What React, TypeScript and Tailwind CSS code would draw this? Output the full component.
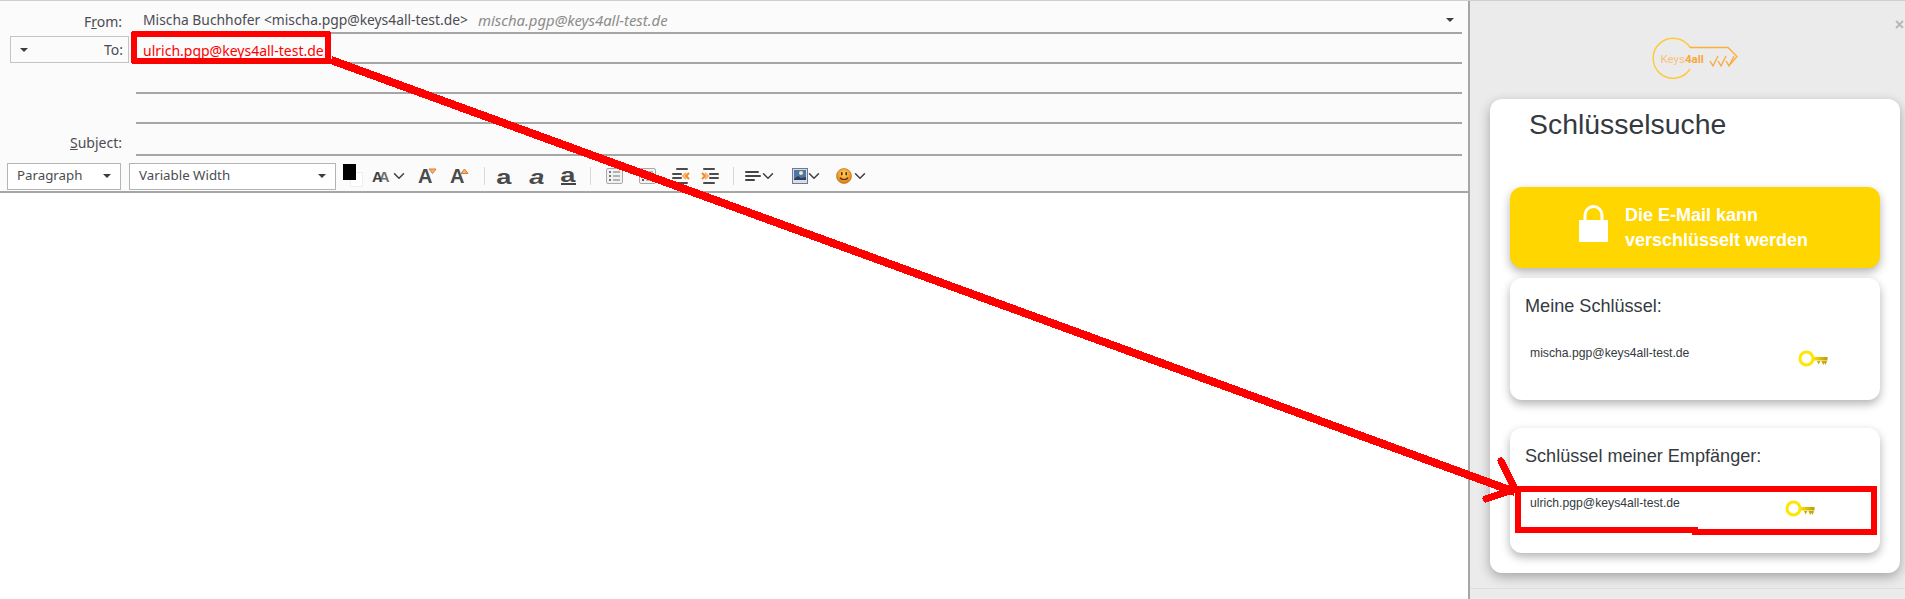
import type { ReactNode } from "react";
import { ChevronDown } from "lucide-react";

const UI_FONT = "font-['Noto_Sans',sans-serif]";

function Row({ label, height, textOffset }: { label?: ReactNode; height: string; textOffset: string }) {
  return (
    <div className={`flex ${height}`}>
      <div className={`flex w-[122px] items-center justify-end text-[14px] text-[#4c4c52] ${textOffset}`}>{label}</div>
      <div className="ml-[14px] min-w-0 flex-1 border-b-2 border-[#a6a6a6]" />
    </div>
  );
}

function Caret({ className = "" }: { className?: string }) {
  return <span className={`h-0 w-0 border-x-[4px] border-t-[4px] border-x-transparent border-t-[#3c3c44] ${className}`} />;
}

function Select({ label, width }: { label: string; width: string }) {
  return (
    <div className={`flex h-[27px] items-center justify-between border border-[#b4b4b4] bg-white pl-[9px] pr-[9px] text-[13.3px] text-[#4c4c52] ${width}`}>
      {label}
      <Caret />
    </div>
  );
}

function Chevron() {
  return <ChevronDown size={18} strokeWidth={2} className="-mx-[2.5px] text-[#3f3f45]" />;
}

function Divider() {
  return <span className="block h-[18px] w-px bg-[#d8d8d8]" />;
}

function LetterIcon({ children, italic, underline }: { children: string; italic?: boolean; underline?: boolean }) {
  return (
    <span className="flex h-[22px] w-[18px] flex-col items-center justify-center font-['Liberation_Sans',sans-serif] text-[#4a4a4a]">
      <span className={`inline-block scale-x-[1.3] text-[21px] font-bold leading-[15px] ${italic ? "italic" : ""}`}>{children}</span>
      {underline && <span className="mt-[1px] h-[2px] w-[15px] bg-[#444]" />}
    </span>
  );
}

function FontSizeIcon({ mark }: { mark: "both" | "down" | "up" }) {
  return (
    <svg width="20" height="24" viewBox="0 0 20 24">
      {mark === "both" ? (
        <>
          <defs>
            <linearGradient id="fontSizeFill" x1="0" x2="1">
              <stop offset="0.5" stopColor="#3f3f3f" />
              <stop offset="0.5" stopColor="#6f6f6f" />
            </linearGradient>
          </defs>
          <text x="0" y="18" fontFamily="Liberation Sans" fontWeight="700" fontSize="15" letterSpacing="-4" fill="url(#fontSizeFill)">AA</text>
        </>
      ) : (
        <>
          <text x="0" y="19" fontFamily="Liberation Sans" fontWeight="700" fontSize="20" fill="#4a4a4a">A</text>
          {mark === "down" ? (
            <path d="M11 5h7l-3.5 4.5z" fill="#f4b183" stroke="#e07b1a" strokeWidth="1" />
          ) : (
            <path d="M11 9.5h7L14.5 5z" fill="#f4b183" stroke="#e07b1a" strokeWidth="1" />
          )}
        </>
      )}
    </svg>
  );
}

function ListIcon({ numbered }: { numbered?: boolean }) {
  return (
    <svg width="17" height="16" viewBox="0 0 17 16">
      <rect x="0.5" y="0.5" width="16" height="15" rx="1.5" fill="#f1f1f1" stroke="#a9a9a9" />
      {[4, 8, 12].map((y) => (
        <g key={y}>
          <rect x="3" y={y - 1} width="2" height="2" fill={numbered ? "#555" : "#777"} />
          <rect x="7" y={y - 0.5} width="7" height="1" fill="#777" />
        </g>
      ))}
    </svg>
  );
}

function IndentIcon({ outdent }: { outdent?: boolean }) {
  const bars = outdent
    ? [[2, 4, 12], [7, 0, 10], [11, 0, 10], [16, 4, 12]]
    : [[2, 2, 12], [7, 8, 10], [11, 8, 10], [16, 2, 12]];
  return (
    <svg width="18" height="18" viewBox="0 0 18 18">
      {bars.map(([y, x, w]) => (
        <rect key={y} x={x} y={y - 1} width={w} height="2" rx="1" fill="#4b4b4b" />
      ))}
      <path d={outdent ? "M17 6l-3 3 3 3" : "M1 6l3 3-3 3"} fill="none" stroke="#f08a24" strokeWidth="2" />
      <path d={outdent ? "M14 6l-3 3 3 3" : "M4 6l3 3-3 3"} fill="none" stroke="#f8b26a" strokeWidth="2" />
    </svg>
  );
}

function AlignIcon() {
  return (
    <svg width="16" height="13" viewBox="0 0 16 13">
      {[[1, 14], [5, 16], [9, 10]].map(([y, w]) => (
        <rect key={y} x="0" y={y} width={w} height="2" rx="1" fill="#444" />
      ))}
    </svg>
  );
}

function ImageIcon() {
  return (
    <svg width="16" height="16" viewBox="0 0 16 16">
      <rect x="0.5" y="0.5" width="15" height="15" fill="#d8dde6" stroke="#6d7a94" />
      <rect x="2" y="2" width="12" height="9" fill="#4f76a8" />
      <circle cx="9" cy="5" r="2" fill="#f4e9b0" />
      <path d="M2 11l4-3 3 2 5-1v3H2z" fill="#2f3f58" />
    </svg>
  );
}

function Smiley() {
  return (
    <svg width="16" height="16" viewBox="0 0 16 16">
      <defs>
        <radialGradient id="smile" cx="50%" cy="35%" r="65%">
          <stop offset="0" stopColor="#ffd25e" />
          <stop offset="1" stopColor="#dd7a12" />
        </radialGradient>
      </defs>
      <circle cx="8" cy="8" r="7.5" fill="url(#smile)" stroke="#b9650f" strokeWidth="0.6" />
      <rect x="5" y="4" width="1.6" height="3.4" rx="0.8" fill="#4a2a08" />
      <rect x="9.4" y="4" width="1.6" height="3.4" rx="0.8" fill="#4a2a08" />
      <path d="M4 9.6c1.6 2.6 6.4 2.6 8 0" fill="none" stroke="#4a2a08" strokeWidth="1.1" />
    </svg>
  );
}

function Toolbar() {
  return (
    <div className="flex h-[37px] items-center border-b-2 border-[#a6a6a6] pl-[7px] pt-[5px]">
      <Select label="Paragraph" width="w-[114px]" />
      <div className="ml-[8px]">
        <Select label="Variable Width" width="w-[207px]" />
      </div>
      <div className="relative ml-[7px] h-[25px] w-[21px]">
        <span className="absolute left-[7px] top-[8px] h-[15px] w-[13px] border border-[#eee] bg-white" />
        <span className="absolute left-0 top-0 h-[16px] w-[13px] bg-black" />
      </div>
      <div className="ml-[8px]"><FontSizeIcon mark="both" /></div>
      <Chevron />
      <div className="ml-[13px]"><FontSizeIcon mark="down" /></div>
      <div className="ml-[12px]"><FontSizeIcon mark="up" /></div>
      <div className="ml-[14px]"><Divider /></div>
      <div className="ml-[10px]"><LetterIcon>a</LetterIcon></div>
      <div className="ml-[15px]"><LetterIcon italic>a</LetterIcon></div>
      <div className="ml-[13px]"><LetterIcon underline>a</LetterIcon></div>
      <div className="ml-[13px]"><Divider /></div>
      <div className="ml-[15px]"><ListIcon /></div>
      <div className="ml-[16px]"><ListIcon numbered /></div>
      <div className="ml-[16px]"><IndentIcon outdent /></div>
      <div className="ml-[11px]"><IndentIcon /></div>
      <div className="ml-[14px]"><Divider /></div>
      <div className="ml-[11px]"><AlignIcon /></div>
      <div className="ml-0"><Chevron /></div>
      <div className="ml-[18px]"><ImageIcon /></div>
      <div className="-ml-px"><Chevron /></div>
      <div className="ml-[16px]"><Smiley /></div>
      <div className="ml-px"><Chevron /></div>
    </div>
  );
}

function Logo() {
  return (
    <svg width="92" height="48" viewBox="0 0 92 48">
      <path d="M40 13.5A20 20 0 1 0 40 35" fill="none" stroke="#ffc93f" strokeWidth="1.4" />
      <path d="M40 13.5h38l9 9-7 8" fill="none" stroke="#fbb03b" strokeWidth="1.4" />
      <text x="10.5" y="29" fontFamily="Roboto" fontSize="11.5" fill="#f9c27c">
        Keys<tspan fontWeight="700" fill="#f9a63c">4all</tspan>
      </text>
      <path d="M60 27l3 5 5-10M68 27l3 5 5-10M76 27l3 5 5-10" fill="none" stroke="#f9a63c" strokeWidth="1.3" />
    </svg>
  );
}

function KeyIcon() {
  return (
    <svg width="30" height="18" viewBox="0 0 30 18">
      <defs>
        <linearGradient id="keyShaft" x1="0" x2="1">
          <stop offset="0" stopColor="#ffe100" />
          <stop offset="1" stopColor="#b89c08" />
        </linearGradient>
      </defs>
      <circle cx="8.5" cy="8.5" r="6.5" fill="none" stroke="#ffe600" strokeWidth="3" />
      <rect x="15" y="7" width="14.5" height="3.5" fill="url(#keyShaft)" />
      <path d="M19 11h3.4l-1.7 3.5zM23.4 11H29l-1.2 4-1.3-2-1.3 2z" fill="#c9ab08" />
    </svg>
  );
}

function KeyCard({ title, email, keyOffset, height }: { title: string; email: string; keyOffset: string; height: string }) {
  return (
    <section className={`rounded-[12px] bg-white pl-[15px] shadow-[0_4px_10px_rgba(0,0,0,0.3)] ${height}`}>
      <h2 className="pt-[18px] text-[18.1px] leading-[21px] text-[#343a40]">{title}</h2>
      <div className="mt-[28px] flex items-start pl-[5px]">
        <span className="w-[255px] text-[12.2px] leading-[16px] text-[#343a40]">{email}</span>
        <span className={`mt-[5px] ${keyOffset}`}><KeyIcon /></span>
      </div>
    </section>
  );
}

function Annotations() {
  return (
    <svg className="pointer-events-none absolute left-0 top-0" width="1905" height="599" viewBox="0 0 1905 599" shapeRendering="crispEdges">
      <rect x="134" y="34" width="194" height="27" fill="none" stroke="#ff0000" strokeWidth="6" strokeLinejoin="round" />
      <path d="M331 60L1515 492" stroke="#ff0000" strokeWidth="8" />
      <path d="M1501 461L1515 489L1486 499" fill="none" stroke="#ff0000" strokeWidth="7" strokeLinecap="round" />
      <path d="M1518 489H1874V532H1695V530H1518Z" fill="none" stroke="#ff0000" strokeWidth="6" />
    </svg>
  );
}

export default function App() {
  return (
    <div className={`relative h-[599px] w-[1905px] overflow-hidden bg-white ${UI_FONT}`}>
      <div className="flex h-full border-t border-[#cfcfcf]">
        <main className="h-full w-[1470px] border-r-2 border-[#a6a6a6]">
          <div className="bg-[#fbfbfb] pr-[6px]">
            <div className="flex h-[33px]">
              <div className="flex w-[122px] items-center justify-end pt-[7px] text-[14px] text-[#4c4c52]">
                <span>F<span className="underline">r</span>om:</span>
              </div>
              <div className="ml-[14px] flex flex-1 items-center border-b-2 border-[#a6a6a6] pl-[7px] pt-[7px] text-[13.85px] text-[#4c4c52]">
                Mischa Buchhofer &lt;mischa.pgp@keys4all-test.de&gt;
                <span className="ml-[10px] text-[14.9px] italic text-[#8c8c8c]">mischa.pgp@keys4all-test.de</span>
                <Caret className="ml-auto mr-[8px]" />
              </div>
            </div>
            <div className="flex h-[30px]">
              <div className="ml-[10px] mt-[2px] flex h-[27px] w-[119px] items-center justify-between border border-[#c4c4c4] pl-[9px] pr-[5px] text-[14px] text-[#4c4c52]">
                <Caret />
                To:
              </div>
              <div className="ml-[7px] flex flex-1 items-center border-b-2 border-[#a6a6a6] pl-[7px] pt-[4px] text-[14px] text-[#ff0000]">
                ulrich.pgp@keys4all-test.de
              </div>
            </div>
            <Row height="h-[30px]" textOffset="" />
            <Row height="h-[30px]" textOffset="" />
            <Row height="h-[32px]" textOffset="pt-[4px]" label={<span><span className="underline">S</span>ubject:</span>} />
          </div>
          <div className="bg-[#fbfbfb]">
            <Toolbar />
          </div>
        </main>

        <aside className="flex h-full flex-1 flex-col bg-[#ebebeb] font-['Liberation_Sans',sans-serif]">
          <header className="flex h-[98px] items-start">
            <div className="ml-[180px] mt-[33px]"><Logo /></div>
            <span className="ml-auto mr-[1px] mt-[14px] text-[16px] font-bold leading-[20px] text-[#b5b5b5]">×</span>
          </header>
          <div className="ml-[20px] h-[474px] w-[410px] rounded-[12px] bg-white px-[20px] shadow-[0_4px_12px_rgba(0,0,0,0.3)]">
            <h1 className="ml-[19px] pt-[9px] text-[28.4px] leading-[32px] text-[#343a40]">Schlüsselsuche</h1>
            <div className="mt-[47px] flex h-[81px] items-center rounded-[12px] bg-[#ffd600] pl-[69px] shadow-[0_4px_10px_rgba(0,0,0,0.3)]">
              <svg width="29" height="37" viewBox="0 0 29 37" className="mb-[9px]">
                <path d="M6 16V10a8.5 8.5 0 0 1 17 0v6" fill="none" stroke="#fff" strokeWidth="3" />
                <rect x="0" y="15" width="29" height="22" fill="#fff" />
              </svg>
              <p className="ml-[17px] text-[18px] font-bold leading-[25px] text-white">
                Die E-Mail kann
                <br />
                verschlüsselt werden
              </p>
            </div>
            <div className="mt-[10px]">
              <KeyCard title="Meine Schlüssel:" email="mischa.pgp@keys4all-test.de" keyOffset="ml-[13px]" height="h-[122px]" />
            </div>
            <div className="mt-[28px]">
              <KeyCard title="Schlüssel meiner Empfänger:" email="ulrich.pgp@keys4all-test.de" keyOffset="ml-0" height="h-[125px]" />
            </div>
          </div>
          <div className="mt-[15px] h-px bg-[#dedede]" />
        </aside>
      </div>
      <Annotations />
    </div>
  );
}
